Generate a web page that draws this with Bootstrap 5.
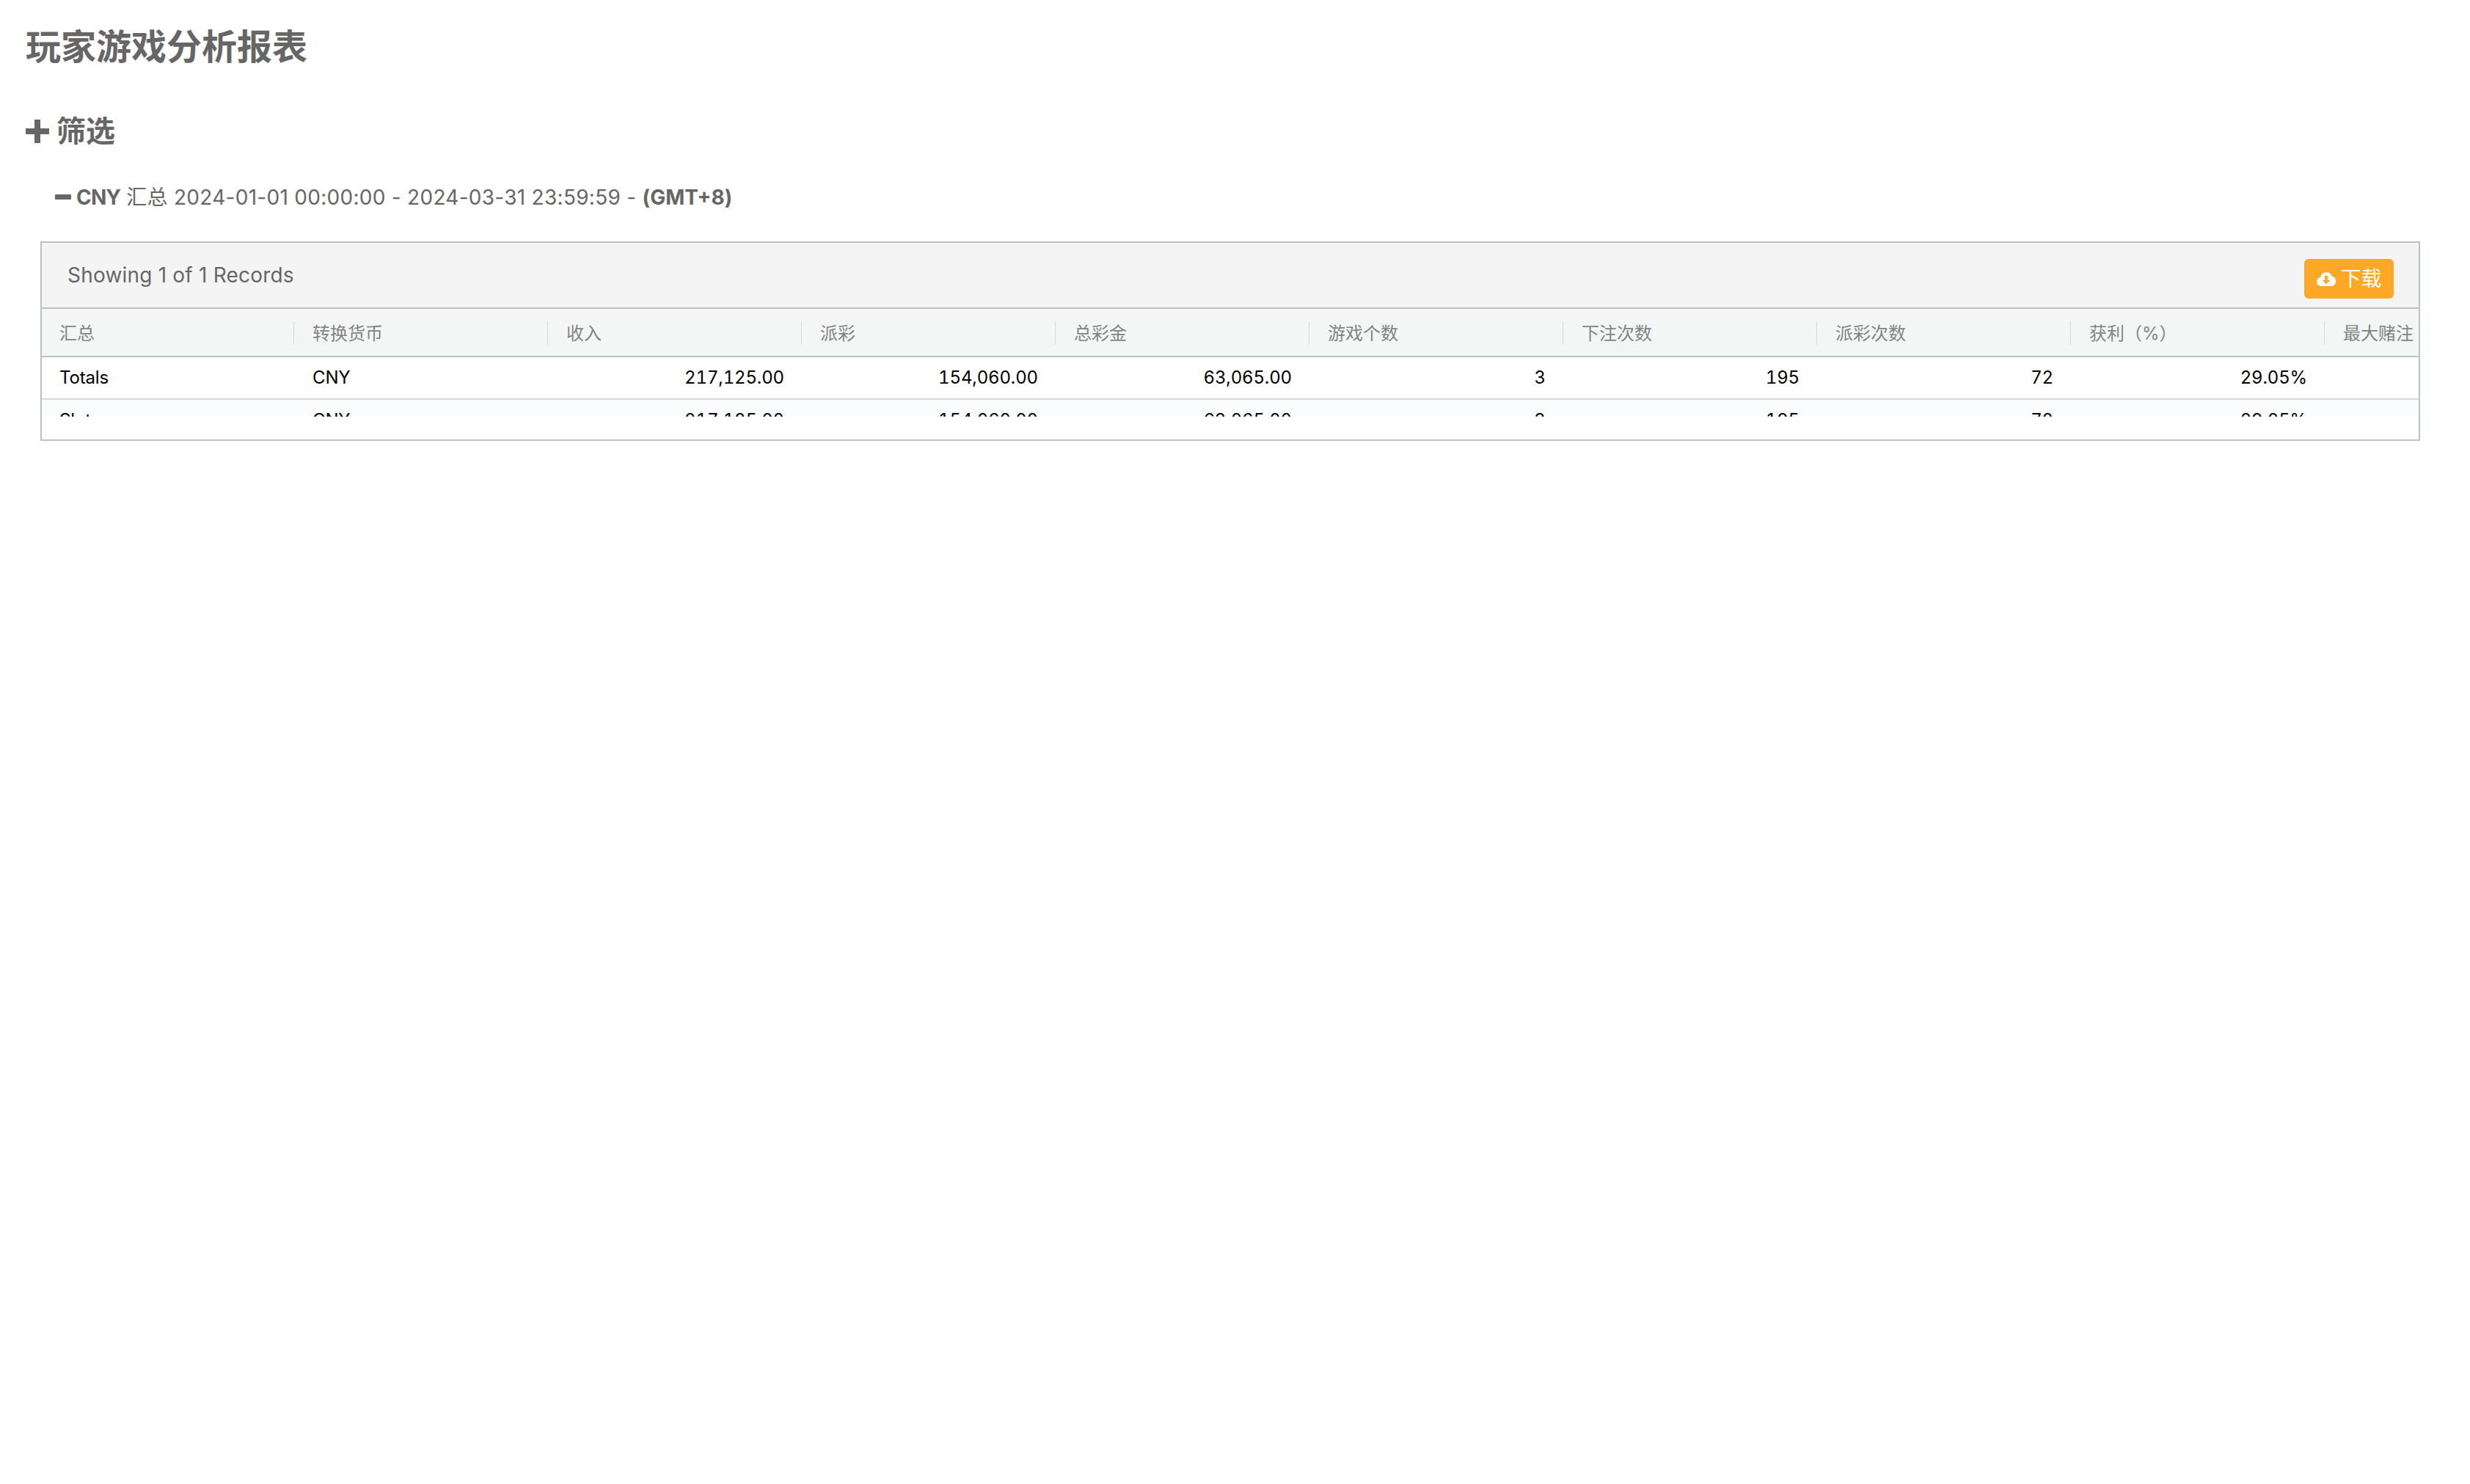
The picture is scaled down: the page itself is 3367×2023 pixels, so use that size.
<!DOCTYPE html>
<html lang="zh">
<head>
<meta charset="utf-8">
<title>玩家游戏分析报表</title>
<link href="https://cdn.jsdelivr.net/npm/bootstrap@5.3.0/dist/css/bootstrap.min.css" rel="stylesheet">
<style>
body{font-family:Inter,"Noto Sans CJK SC",sans-serif;color:#666;background:#fff;}
.pg-wrap{padding:38px 68px 0 35px;}
.pg-title{font-size:48px;font-weight:700;line-height:52px;margin:0;color:#666;}
.flt-head{font-size:40px;font-weight:700;line-height:48px;margin:65px 0 0;color:#666;}
.flt-head svg{width:32px;height:32px;margin-right:10px;vertical-align:-2px;}
.sum-line{font-size:28px;line-height:36px;margin:48px 0 0 40px;color:#666;letter-spacing:.28px;}
.sum-line b{letter-spacing:0;}
.sum-line .cur-code{letter-spacing:-.8px;}
.sum-line svg{width:22px;height:22px;margin-right:7px;vertical-align:-1px;}
.rep-panel{margin:42px 0 0 20px;border:2px solid #bcc1c5;height:272px;overflow:hidden;}
.rep-top{height:90px;background:#f4f4f4;border-bottom:2px solid #bcc1c5;padding:0 34px 0 35px;font-size:28px;}
.rep-count{line-height:42px;margin-top:23px;letter-spacing:.2px;}
.dl-btn{margin-top:22px;height:54px;width:122px;background:#ffa726;border:0;border-radius:6px;color:#fff;font-size:28px;line-height:1;padding:0;}
.dl-btn:hover{background:#ffa726;color:#fff;}
.dl-btn svg{width:28px;height:28px;margin-right:5px;vertical-align:-5px;}
.rep-scroll{height:147px;overflow:hidden;}
.rep-table{table-layout:fixed;width:3457px;margin:0;font-size:24px;border-collapse:separate;border-spacing:0;font-variant-numeric:tabular-nums;font-feature-settings:"tnum","calt" 0;}
.rep-table th{width:346px;height:66px;background:#f4f6f5;color:#808585;font-weight:400;padding:3px 24px 0 26px;border-bottom:2px solid #bcc1c5;white-space:nowrap;vertical-align:middle;position:relative;}
.rep-table th:first-child{width:343px;padding-left:24px;}
.rep-table th+th::before{content:"";position:absolute;left:0;top:17px;height:32px;width:1px;background:#d5d8d8;}
.rep-table td{height:58px;padding:0 23px 0 26px;color:#000;vertical-align:middle;border-bottom:2px solid #d5d8dc;white-space:nowrap;letter-spacing:-.15px;}
.rep-table td:first-child{padding-left:24px;}
.row-alt td{background:#fbfcfe;}
</style>
</head>
<body>
<div class="pg-wrap">
  <h1 class="pg-title">玩家游戏分析报表</h1>
  <h2 class="flt-head"><svg viewBox="0 0 32 32" aria-hidden="true"><path fill="#666" d="M12 0h8v12h12v8H20v12h-8V20H0v-8h12z"/></svg>筛选</h2>
  <p class="sum-line"><svg viewBox="0 0 22 22" aria-hidden="true"><rect x="0" y="7" width="22" height="7" rx="1" fill="#666"/></svg><b class="cur-code">CNY</b> 汇总 2024-01-01 00:00:00 - 2024-03-31 23:59:59 - <b>(GMT+8)</b></p>
  <div class="rep-panel">
    <div class="rep-top d-flex justify-content-between align-items-start">
      <span class="rep-count">Showing 1 of 1 Records</span>
      <button class="btn dl-btn" type="button"><svg viewBox="0 0 28 28" aria-hidden="true"><path fill="#fff" d="M7 23a6 6 0 0 1-1-11.900A8 8 0 0 1 21.500 9.500 6.800 6.800 0 0 1 21 23z"/><path fill="#ffa726" d="M12 9h4v6h3.500L14 20.500 8.500 15H12z"/></svg>下载</button>
    </div>
    <div class="rep-scroll">
      <table class="table rep-table">
        <thead><tr><th>汇总</th><th>转换货币</th><th>收入</th><th>派彩</th><th>总彩金</th><th>游戏个数</th><th>下注次数</th><th>派彩次数</th><th>获利（%）</th><th>最大赌注</th></tr></thead>
        <tbody>
          <tr><td>Totals</td><td>CNY</td><td class="text-end">217,125.00</td><td class="text-end">154,060.00</td><td class="text-end">63,065.00</td><td class="text-end">3</td><td class="text-end">195</td><td class="text-end">72</td><td class="text-end">29.05%</td><td class="text-end">500.00</td></tr>
          <tr class="row-alt"><td>Slots</td><td>CNY</td><td class="text-end">217,125.00</td><td class="text-end">154,060.00</td><td class="text-end">63,065.00</td><td class="text-end">3</td><td class="text-end">195</td><td class="text-end">72</td><td class="text-end">29.05%</td><td class="text-end">500.00</td></tr>
        </tbody>
      </table>
    </div>
  </div>
</div>
</body>
</html>
